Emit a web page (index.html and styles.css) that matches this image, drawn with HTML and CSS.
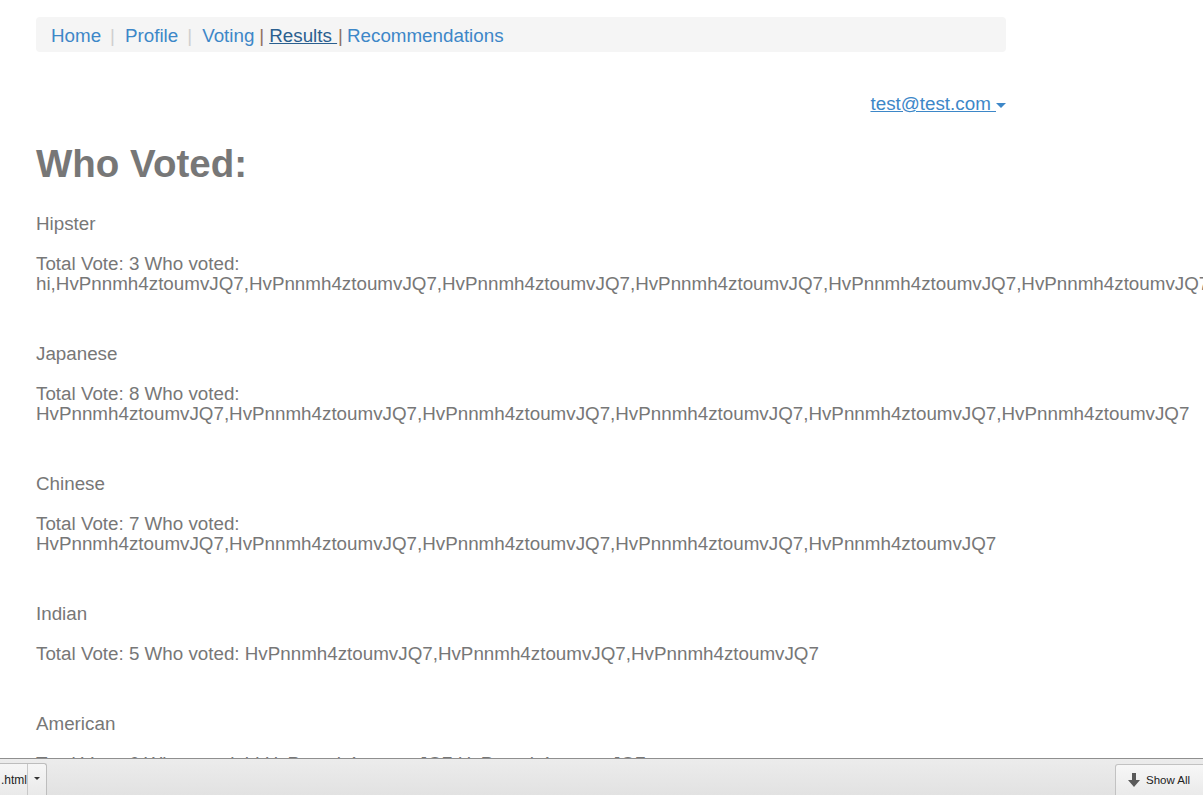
FILE: index.html
```html
<!DOCTYPE html>
<html>
<head>
<meta charset="utf-8">
<title>Results</title>
<link rel="stylesheet" href="styles.css">
</head>
<body>
<div class="page">
  <nav class="navbar">
    <a class="nav-link" href="#">Home</a><span class="sep light">|</span>
    <a class="nav-link" href="#">Profile</a><span class="sep light">|</span>
    <a class="nav-link" href="#">Voting</a><span class="sep dark">|</span>
    <a class="nav-link active" href="#">Results </a><span class="sep dark tight">|</span>
    <a class="nav-link" href="#">Recommendations</a>
  </nav>

  <div class="user-row">
    <a class="user-link" href="#">test@test.com <span class="caret"></span></a>
  </div>

  <h1 class="title">Who Voted:</h1>

  <div class="section">
    <p class="cuisine">Hipster</p>
    <p class="votes">Total Vote: 3 Who voted: hi,HvPnnmh4ztoumvJQ7,HvPnnmh4ztoumvJQ7,HvPnnmh4ztoumvJQ7,HvPnnmh4ztoumvJQ7,HvPnnmh4ztoumvJQ7,HvPnnmh4ztoumvJQ7</p>
  </div>
  <div class="section">
    <p class="cuisine">Japanese</p>
    <p class="votes">Total Vote: 8 Who voted: HvPnnmh4ztoumvJQ7,HvPnnmh4ztoumvJQ7,HvPnnmh4ztoumvJQ7,HvPnnmh4ztoumvJQ7,HvPnnmh4ztoumvJQ7,HvPnnmh4ztoumvJQ7</p>
  </div>
  <div class="section">
    <p class="cuisine">Chinese</p>
    <p class="votes">Total Vote: 7 Who voted: HvPnnmh4ztoumvJQ7,HvPnnmh4ztoumvJQ7,HvPnnmh4ztoumvJQ7,HvPnnmh4ztoumvJQ7,HvPnnmh4ztoumvJQ7</p>
  </div>
  <div class="section">
    <p class="cuisine">Indian</p>
    <p class="votes">Total Vote: 5 Who voted: HvPnnmh4ztoumvJQ7,HvPnnmh4ztoumvJQ7,HvPnnmh4ztoumvJQ7</p>
  </div>
  <div class="section">
    <p class="cuisine">American</p>
    <p class="votes">Total Vote: 6 Who voted: hi,HvPnnmh4ztoumvJQ7,HvPnnmh4ztoumvJQ7</p>
  </div>
</div>

<div class="shelf">
  <div class="dl-item">
    <span class="dl-name">.html</span>
    <span class="dl-menu"><span class="mini-caret"></span></span>
  </div>
  <div class="show-all">
    <svg class="dl-icon" width="12" height="14" viewBox="0 0 12 14"><path d="M4 0h4v7h4L6 14 0 7h4z" fill="#5a5a5a"/></svg>
    <span>Show All</span>
  </div>
</div>
</body>
</html>
```

FILE: styles.css
```css
html, body {
  margin: 0;
  padding: 0;
  overflow: hidden;
  background: #fff;
}
body {
  width: 1203px;
  height: 795px;
  font-family: "Liberation Sans", Arial, Helvetica, sans-serif;
  color: #777;
  font-size: 18.8px;
  line-height: 20px;
}
.page {
  width: 970px;
  margin-left: 36px;
  padding-top: 17px;
}
.navbar {
  height: 35px;
  background: #f5f5f5;
  border-radius: 4px;
  padding: 2px 15px 0;
  display: flex;
  align-items: center;
  font-size: 18.8px;
  box-sizing: border-box;
}
.nav-link {
  color: #3d87c8;
  text-decoration: none;
}
.nav-link.active {
  color: #2a5f8f;
  text-decoration: underline;
  white-space: pre;
}
.sep {
  margin: 0 10px 0 9px;
}
.sep.light {
  color: #cfcfcf;
}
.sep.dark {
  color: #8e7262;
  margin: 0 5px 0 5px;
}
.sep.tight {
  margin: 0 4px 0 1px;
}
.user-row {
  margin-top: 42px;
  display: flex;
  justify-content: flex-end;
}
.user-link {
  color: #3d87c8;
  text-decoration: underline;
}
.caret {
  display: inline-block;
  width: 0;
  height: 0;
  border-left: 5px solid transparent;
  border-right: 5px solid transparent;
  border-top: 5px solid #3d87c8;
  vertical-align: middle;
  margin-left: 0;
}
.title {
  margin: 30px 0 30px;
  font-size: 38.5px;
  line-height: 40px;
  font-weight: bold;
  color: #777;
}
.section {
  margin-bottom: 50px;
}
.cuisine {
  margin: 0 0 20px;
}
.votes {
  margin: 0;
  width: 970px;
}
.shelf {
  position: fixed;
  left: 0;
  bottom: 0;
  width: 1203px;
  height: 36px;
  border-top: 1px solid #8f8f8f;
  background: linear-gradient(#ececec, #e2e2e2);
  font-family: "Liberation Sans", Arial, sans-serif;
  font-size: 11.5px;
  color: #222;
}
.dl-item {
  position: absolute;
  left: -6px;
  top: 4px;
  height: 32px;
  width: 51px;
  border: 1px solid #bdbdbd;
  border-bottom: none;
  border-radius: 3px 3px 0 0;
  background: linear-gradient(#f6f6f6, #e9e9e9);
  display: flex;
  align-items: center;
}
.dl-name {
  padding-left: 6px;
  width: 26px;
  font-size: 12px;
}
.dl-menu {
  height: 100%;
  flex: 1;
  border-left: 1px solid #c8c8c8;
  display: flex;
  align-items: center;
  justify-content: center;
}
.mini-caret {
  width: 0;
  height: 0;
  border-left: 3px solid transparent;
  border-right: 3px solid transparent;
  border-top: 3px solid #333;
  margin-top: -4px;
}
.show-all {
  position: absolute;
  left: 1115px;
  top: 5px;
  width: 95px;
  height: 31px;
  border: 1px solid #c2c2c2;
  border-bottom: none;
  border-radius: 3px 3px 0 0;
  background: linear-gradient(#f7f7f7, #eaeaea);
  display: flex;
  align-items: center;
  gap: 6px;
  padding-left: 12px;
  box-sizing: border-box;
}
.dl-icon {
  display: block;
}
```
